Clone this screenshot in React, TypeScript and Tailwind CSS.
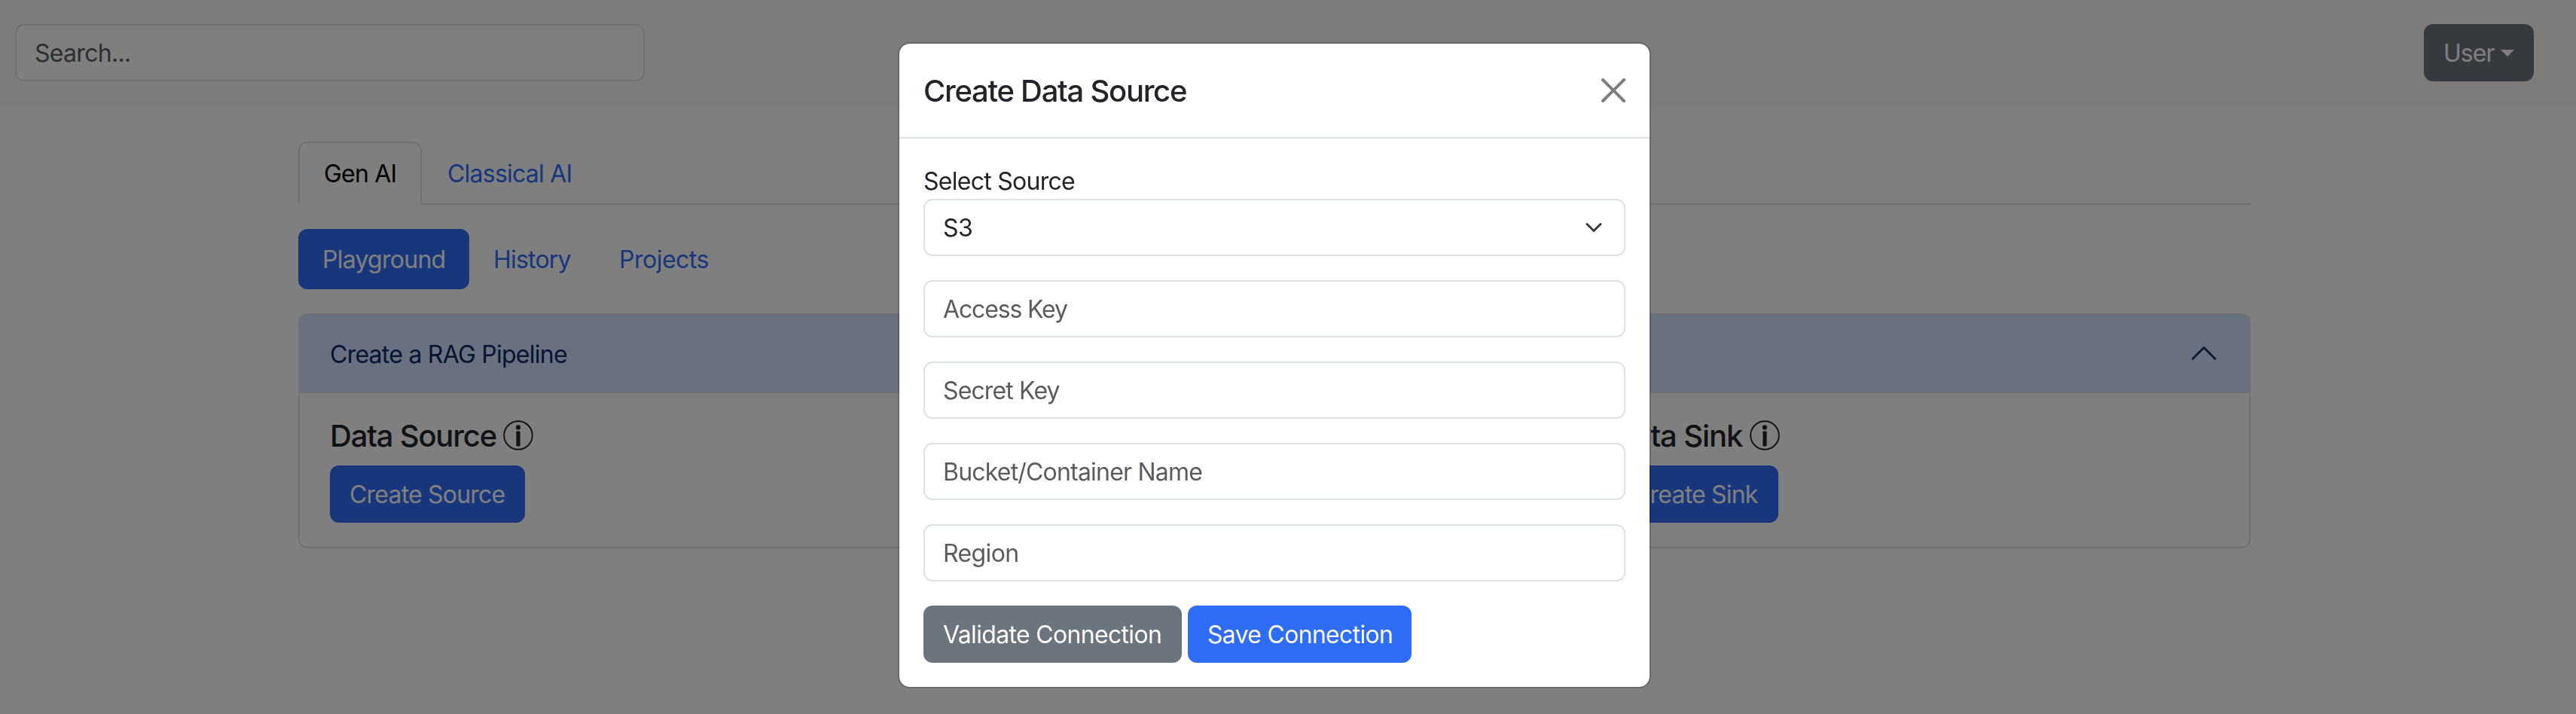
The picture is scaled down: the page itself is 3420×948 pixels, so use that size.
import type { ReactNode } from "react";

function InfoIcon() {
  return (
    <svg className="size-10 shrink-0" viewBox="0 0 40 40">
      <circle cx="20" cy="20" r="18.8" fill="none" stroke="#212529" strokeWidth="1.9" />
      <circle cx="20" cy="9.4" r="3.1" fill="#212529" />
      <rect x="17.4" y="14.4" width="5.2" height="20" rx="0.8" fill="#212529" />
    </svg>
  );
}

function Stage({ title, titleClass, children }: { title: string; titleClass: string; children: ReactNode }) {
  return (
    <div className="flex flex-col items-start gap-4 px-6">
      <h5 className="flex h-12 items-center text-[40px] leading-[48px] font-medium whitespace-nowrap">
        <span className={titleClass}>{title}</span>
        <InfoIcon />
      </h5>
      {children}
    </div>
  );
}

const primaryButton =
  "h-[76px] rounded-xl bg-[#306df6] px-[26px] pt-0.5 text-left leading-[48px] whitespace-nowrap text-white";

function Field({ label, tracking }: { label: string; tracking: string }) {
  return (
    <input
      type="text"
      placeholder={label}
      className={`h-[76px] w-full rounded-xl border-2 border-[#dee2e6] bg-white px-6 placeholder:text-[#212529bf] ${tracking}`}
    />
  );
}

function Navbar() {
  return (
    <header className="flex h-[140px] items-center justify-between bg-[#f8f9fa] pr-14 pl-5">
      <input
        type="text"
        placeholder="Search..."
        className="h-[76px] w-[836px] rounded-xl border-2 border-[#dee2e6] bg-white px-6 tracking-[-0.7px] placeholder:text-[#212529bf]"
      />
      <button className="flex h-[76px] w-[146px] items-center rounded-xl bg-[#6c757d] pl-[26px] text-white">
        <span className="w-[76px] pt-0.5 text-left tracking-[-0.95px]">User</span>
        <svg className="h-[9px] w-[18px]" viewBox="0 0 18 9">
          <path d="M0 0h18L9 9z" fill="currentColor" />
        </svg>
      </button>
    </header>
  );
}

function Pipeline() {
  return (
    <section className="mt-8 overflow-hidden rounded-xl border-2 border-[#dee2e6] bg-white">
      <div className="flex h-[104px] items-center justify-between border-b-2 border-[#dee2e6] bg-[#d3e0fe] px-10 text-[#082b66]">
        <span className="pt-1 tracking-[-0.75px]">Create a RAG Pipeline</span>
        <svg className="size-10" viewBox="0 0 16 16" fill="none" stroke="currentColor" strokeLinecap="round" strokeLinejoin="round">
          <path d="m2 11 6-6 6 6" />
        </svg>
      </div>
      <div className="grid grid-cols-3 px-4 py-8">
        <Stage title="Data Source" titleClass="w-[230px] pt-0.5 tracking-[-1.2px]">
          <button className={`${primaryButton} w-[259px] tracking-[-0.8px]`}>Create Source</button>
        </Stage>
        <div />
        <Stage title="Data Sink" titleClass="w-[181px] pt-0.5 tracking-[-1.1px]">
          <button className={`${primaryButton} w-[219px] tracking-[-0.8px]`}>Create Sink</button>
        </Stage>
      </div>
    </section>
  );
}

function SourceModal() {
  return (
    <div className="fixed inset-0 flex items-start justify-center bg-black/50 pt-14 pr-9">
      <div className="w-[1000px] rounded-2xl border-2 border-black/[0.175] bg-white bg-clip-padding">
        <div className="flex h-[126px] items-center justify-between border-b-2 border-[#dee2e6] px-8">
          <h4 className="pt-0.5 text-[40px] leading-[60px] font-medium tracking-[-1.28px]">Create Data Source</h4>
          <svg className="size-8 opacity-50" viewBox="0 0 16 16">
            <path d="M.293.293a1 1 0 0 1 1.414 0L8 6.586 14.293.293a1 1 0 1 1 1.414 1.414L9.414 8l6.293 6.293a1 1 0 0 1-1.414 1.414L8 9.414l-6.293 6.293a1 1 0 0 1-1.414-1.414L6.586 8 .293 1.707a1 1 0 0 1 0-1.414z" />
          </svg>
        </div>
        <div className="flex flex-col gap-8 p-8">
          <div>
            <label className="block h-12 pt-px leading-[48px] tracking-[-0.73px]">Select Source</label>
            <div className="flex h-[76px] items-center justify-between rounded-xl border-2 border-[#dee2e6] px-6">
              <span className="pt-0.5 tracking-[-0.5px]">S3</span>
              <svg
                className="h-6 w-8"
                viewBox="0 0 16 16"
                fill="none"
                stroke="#343a40"
                strokeWidth="2"
                strokeLinecap="round"
                strokeLinejoin="round"
              >
                <path d="m2 5 6 6 6-6" />
              </svg>
            </div>
          </div>
          <Field label="Access Key" tracking="tracking-[-1.15px]" />
          <Field label="Secret Key" tracking="tracking-[-0.87px]" />
          <Field label="Bucket/Container Name" tracking="tracking-[-0.8px]" />
          <Field label="Region" tracking="tracking-[-0.62px]" />
          <div className="flex gap-2">
            <button className="h-[76px] w-[343px] rounded-xl bg-[#6c757d] px-[26px] pt-0.5 text-left tracking-[-0.67px] whitespace-nowrap text-white">
              Validate Connection
            </button>
            <button className={`${primaryButton} w-[297px] tracking-[-0.7px]`}>Save Connection</button>
          </div>
        </div>
      </div>
    </div>
  );
}

export default function App() {
  return (
    <div className="h-[948px] overflow-hidden bg-white font-['Inter',sans-serif] text-[32px] leading-[48px] text-[#212529]">
      <Navbar />
      <main className="mt-12 pr-9">
        <div className="mx-auto w-[2592px]">
          <nav className="flex h-[84px] border-b-2 border-[#dee2e6] text-[#306df6]">
            <a className="h-[84px] w-[164px] rounded-t-xl border-2 border-[#dee2e6] border-b-white bg-white px-8 pt-[17px] tracking-[-0.8px] whitespace-nowrap text-black">
              Gen AI
            </a>
            <a className="h-[82px] px-[34px] pt-[19px] tracking-[-0.77px] whitespace-nowrap">Classical AI</a>
          </nav>
          <nav className="mt-8 flex text-[#306df6]">
            <a className="w-[227px] rounded-xl bg-[#306df6] px-8 pt-[17px] pb-[15px] tracking-[-0.74px] text-white">
              Playground
            </a>
            <a className="w-[167px] px-8 pt-[17px] tracking-[-0.8px]">History</a>
            <a className="px-8 pt-[17px] tracking-[-0.5px]">Projects</a>
          </nav>
          <Pipeline />
        </div>
      </main>
      <SourceModal />
    </div>
  );
}
